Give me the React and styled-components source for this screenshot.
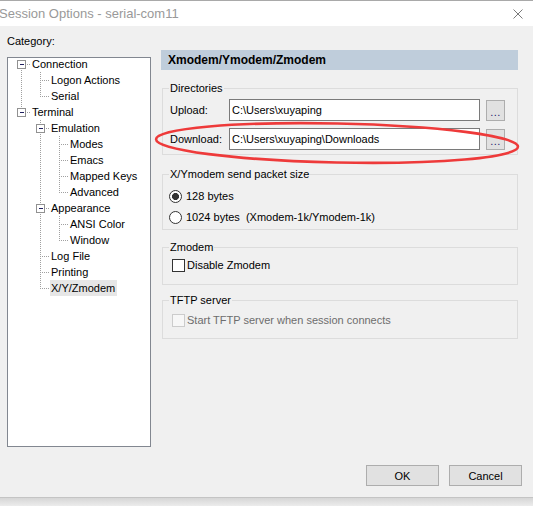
import styled, { createGlobalStyle } from 'styled-components';

// ---------- base ----------
const GlobalStyle = createGlobalStyle`
  html, body {
    margin: 0;
    padding: 0;
    background: #f0f0f0;
  }
  body {
    font-family: "Liberation Sans", "Noto Sans CJK SC", Arial, sans-serif;
    font-size: 11px;
    color: #000;
  }
  * { box-sizing: border-box; }
`;

// ---------- window chrome ----------
const Window = styled.div`
  position: relative;
  width: 533px;
  height: 506px;
  display: flex;
  flex-direction: column;
  overflow: hidden;
  border-top: 1px solid #a9a9a9;
`;

const TitleBar = styled.div`
  flex: none;
  height: 25px;
  background: #fff;
  display: flex;
  align-items: center;
  justify-content: space-between;
  padding-right: 10px;
`;

const Title = styled.span`
  font-size: 13px;
  color: #999;
  margin-left: -1px;
`;

const Body = styled.div`
  flex: none;
  height: 472px;
  background: #f0f0f0;
  display: flex;
  flex-direction: column;
  border-bottom: 1px solid #c4c4c4;
`;

const Shadow = styled.div`
  flex: 1;
  background: linear-gradient(#d6d6d6, #ececec);
`;

const Main = styled.div`
  display: grid;
  grid-template-columns: 144px 357px;
  column-gap: 10px;
  padding-left: 7px;
`;

// ---------- category tree ----------
const Side = styled.div`
  padding-top: 8px;
`;

const SideLabel = styled.div`
  height: 14px;
  line-height: 14px;
  margin-bottom: 9px;
`;

const TreeBox = styled.div`
  height: 390px;
  background: #fff;
  border: 1px solid #828790;
  overflow: hidden;
`;

const TreeList = styled.ul`
  list-style: none;
  margin: -2px 0 0;
  padding: 0;
`;

const TreeRow = styled.li`
  display: flex;
  align-items: center;
  height: 16px;
`;

const TreeText = styled.span`
  padding: 0 2px 0 1px;
  line-height: 16px;
  white-space: nowrap;
  background: ${p => (p.$selected ? '#e6e6e6' : 'transparent')};
`;

// ---------- options pane ----------
const Pane = styled.div`
  padding-top: 24px;
`;

const PaneHeader = styled.div`
  height: 20px;
  line-height: 20px;
  padding-left: 7px;
  background: #bfcddb;
  font-size: 12px;
  font-weight: bold;
`;

const Group = styled.fieldset`
  width: 356px;
  min-width: 0;
  margin: ${p => p.$top}px 0 0 1px;
  padding: ${p => p.$pt}px 6px ${p => p.$pb}px 6px;
  border: 1px solid #dcdcdc;
`;

const Legend = styled.legend`
  padding: 0 1px;
  margin-left: 0;
  line-height: 14px;
`;

const FieldRow = styled.div`
  display: flex;
  align-items: center;
  height: 22px;
  & + & { margin-top: 7px; }
`;

const FieldLabel = styled.span`
  width: 60px;
  padding-left: 1px;
`;

const PathInput = styled.div`
  width: 251px;
  height: 22px;
  line-height: 20px;
  padding-left: 2px;
  background: #fff;
  border: 1px solid #7a7a7a;
  white-space: nowrap;
`;

const BrowseButton = styled.div`
  width: 19px;
  height: 21px;
  margin-left: 6px;
  background: #e1e1e1;
  border: 1px solid #adadad;
  color: #1b1b6f;
  text-align: center;
  line-height: 22px;
  letter-spacing: 0.5px;
`;

const OptionRow = styled.div`
  display: flex;
  align-items: center;
  height: ${p => p.$h || 20}px;
  color: ${p => (p.$disabled ? '#6d6d6d' : '#000')};
  white-space: pre;
  & + & { margin-top: 1px; }
`;

const Radio = styled.span`
  width: 13px;
  height: 13px;
  margin-right: 4px;
  border-radius: 50%;
  border: 1px solid #333;
  background: ${p =>
    p.$checked ? 'radial-gradient(circle, #333 0 3.2px, #fff 3.8px)' : '#fff'};
`;

const Check = styled.span`
  width: 13px;
  height: 13px;
  margin: 0 2px 0 3px;
  border: 1px solid ${p => (p.$disabled ? '#cccccc' : '#333')};
  background: ${p => (p.$disabled ? '#f7f7f7' : '#fff')};
`;

// ---------- buttons ----------
const Footer = styled.div`
  margin-top: auto;
  display: flex;
  justify-content: flex-end;
  gap: 10px;
  padding: 0 11px 11px 0;
`;

const Button = styled.button`
  width: 73px;
  height: 21px;
  padding: 0;
  background: #e1e1e1;
  border: 1px solid #adadad;
  font: inherit;
  color: #000;
`;

// red marker ring drawn over the dialog
const Marker = styled.svg`
  position: absolute;
  left: 0;
  top: 0;
  pointer-events: none;
`;

const tree = [
  { label: 'Connection', children: [{ label: 'Logon Actions' }, { label: 'Serial' }] },
  {
    label: 'Terminal',
    children: [
      {
        label: 'Emulation',
        children: [{ label: 'Modes' }, { label: 'Emacs' }, { label: 'Mapped Keys' }, { label: 'Advanced' }],
      },
      { label: 'Appearance', children: [{ label: 'ANSI Color' }, { label: 'Window' }] },
      { label: 'Log File' },
      { label: 'Printing' },
      { label: 'X/Y/Zmodem', selected: true },
    ],
  },
];

function flatten(nodes, level = 0, guides = [], out = []) {
  nodes.forEach((n, i) => {
    const last = i === nodes.length - 1;
    out.push({ ...n, level, last, first: level === 0 && i === 0, guides });
    if (n.children) flatten(n.children, level + 1, [...guides, !last], out);
  });
  return out;
}

const DOT = { stroke: '#a0a0a0', strokeDasharray: '1 1', shapeRendering: 'crispEdges' };

function Connector({ node }) {
  const { level, last, first, guides, children } = node;
  const colX = l => 13 + 19 * l;
  const c = colX(level);
  const w = c + 10;
  return (
    <svg width={w} height={16} style={{ flex: 'none' }}>
      {guides.map((on, k) =>
        on ? <line key={k} x1={colX(k) + 0.5} y1={0} x2={colX(k) + 0.5} y2={16} {...DOT} /> : null
      )}
      <line x1={c + 0.5} y1={first ? 8 : 0} x2={c + 0.5} y2={last ? 8 : 16} {...DOT} />
      <line x1={c} y1={8.5} x2={c + 10} y2={8.5} {...DOT} />
      {children && (
        <g shapeRendering="crispEdges">
          <rect x={c - 3.5} y={4.5} width={8} height={8} fill="#fff" stroke="#919191" />
          <line x1={c - 1} y1={8.5} x2={c + 3} y2={8.5} stroke="#1f1f5f" />
        </g>
      )}
    </svg>
  );
}

export default function SessionOptions() {
  const rows = flatten(tree);

  return (
    <>
      <GlobalStyle />
      <Window>
        <TitleBar>
          <Title>Session Options - serial-com11</Title>
          <svg width="10" height="10" viewBox="0 0 10 10">
            <path d="M0.5 0.5 L9.5 9.5 M9.5 0.5 L0.5 9.5" stroke="#7a7a7a" strokeWidth="1" />
          </svg>
        </TitleBar>

        <Body>
          <Main>
            <Side>
              <SideLabel>Category:</SideLabel>
              <TreeBox>
                <TreeList>
                  {rows.map(r => (
                    <TreeRow key={r.label}>
                      <Connector node={r} />
                      <TreeText $selected={r.selected}>{r.label}</TreeText>
                    </TreeRow>
                  ))}
                </TreeList>
              </TreeBox>
            </Side>

            <Pane>
              <PaneHeader>Xmodem/Ymodem/Zmodem</PaneHeader>

              <Group $top={11} $pt={4} $pb={4}>
                <Legend>Directories</Legend>
                <FieldRow>
                  <FieldLabel>Upload:</FieldLabel>
                  <PathInput>C:\Users\xuyaping</PathInput>
                  <BrowseButton>...</BrowseButton>
                </FieldRow>
                <FieldRow>
                  <FieldLabel>Download:</FieldLabel>
                  <PathInput>C:\Users\xuyaping\Downloads</PathInput>
                  <BrowseButton>...</BrowseButton>
                </FieldRow>
              </Group>

              <Group $top={12} $pt={5} $pb={2}>
                <Legend>X/Ymodem send packet size</Legend>
                <OptionRow>
                  <Radio $checked />
                  128 bytes
                </OptionRow>
                <OptionRow>
                  <Radio />
                  {'1024 bytes  (Xmodem-1k/Ymodem-1k)'}
                </OptionRow>
              </Group>

              <Group $top={10} $pt={4} $pb={12}>
                <Legend>Zmodem</Legend>
                <OptionRow $h={14}>
                  <Check />
                  Disable Zmodem
                </OptionRow>
              </Group>

              <Group $top={8} $pt={6} $pb={11}>
                <Legend>TFTP server</Legend>
                <OptionRow $h={14} $disabled>
                  <Check $disabled />
                  Start TFTP server when session connects
                </OptionRow>
              </Group>
            </Pane>
          </Main>

          <Footer>
            <Button>OK</Button>
            <Button>Cancel</Button>
          </Footer>
        </Body>
        <Shadow />

        <Marker width="533" height="506">
          <ellipse
            cx="337"
            cy="142"
            rx="181"
            ry="19.5"
            transform="rotate(1.2 337 142)"
            fill="none"
            stroke="#ee3a3a"
            strokeWidth="2.6"
          />
        </Marker>
      </Window>
    </>
  );
}
